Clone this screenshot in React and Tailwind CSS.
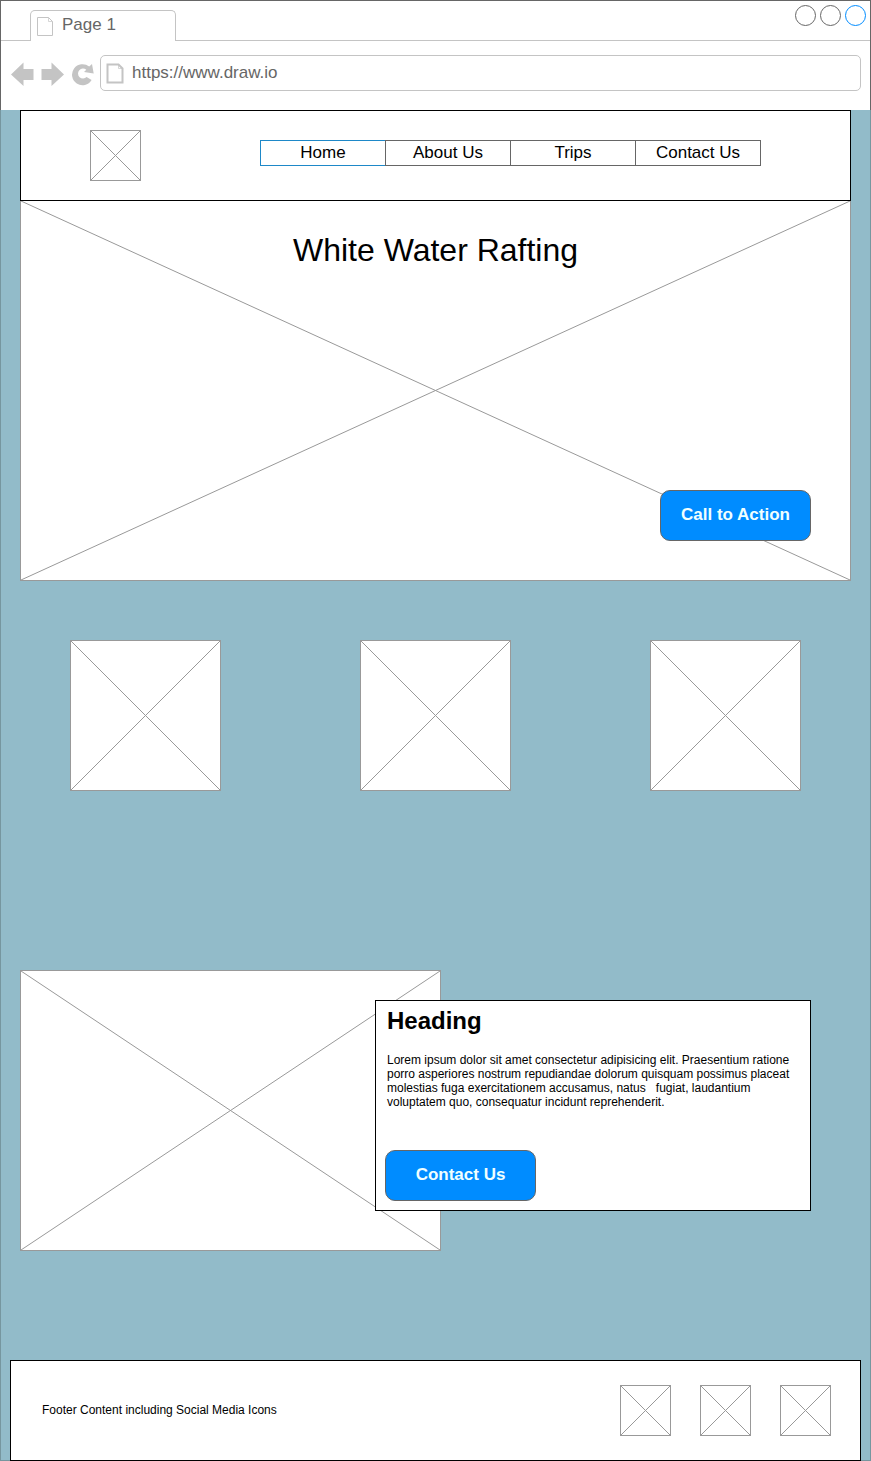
function Placeholder({ className = "", label }) {
  return (
    <div role="img" aria-label={label} className={`border border-[#999999] bg-white ${className}`}>
      <svg className="block h-full w-full" viewBox="0 0 100 100" preserveAspectRatio="none" fill="none" stroke="#999999">
        <path d="M0 0L100 100M100 0L0 100" vectorEffect="non-scaling-stroke" />
      </svg>
    </div>
  );
}

function PageIcon({ className, strokeWidth }) {
  return (
    <svg className={className} viewBox="0 0 18 21" fill="none" stroke="#c4c4c4" strokeWidth={strokeWidth}>
      <path d="M1.500 1.500H12.500L16.500 5.500V19.500H1.500Z" />
      <path d="M12.500 1.500V5.500H16.500" strokeWidth="1" strokeOpacity="0.7" />
    </svg>
  );
}

function Browser() {
  return (
    <div className="border-x border-t border-[#666666] bg-white text-[17px] text-[#666666]">
      <div className="flex h-10 items-end justify-between">
        <div className="h-full w-[29px] shrink-0 border-b border-[#c4c4c4]" />
        <button className="flex h-[31px] w-[146px] shrink-0 items-start rounded-t-[5px] border-x border-t border-[#c4c4c4] pl-[5px]">
          <PageIcon className="mt-[5px] h-[21px] w-[18px]" strokeWidth="1" />
          <span className="ml-2 mt-1 leading-5">Page 1</span>
        </button>
        <div className="flex h-full flex-1 justify-end gap-1 border-b border-[#c4c4c4] pr-1 pt-1">
          <button aria-label="Minimize" className="h-[21px] w-[21px] rounded-full border border-[#666666]" />
          <button aria-label="Maximize" className="h-[21px] w-[21px] rounded-full border border-[#666666]" />
          <button aria-label="Close" className="h-[21px] w-[21px] rounded-full border border-[#008cff]" />
        </div>
      </div>
      <div className="flex h-[69px] items-start pl-[10px] pr-[9px] pt-[14px]">
        <div className="flex w-[89px] shrink-0 gap-[7px] pt-[7px] text-[#c4c4c4]">
          <button aria-label="Back">
            <svg className="block h-6 w-[23px]" viewBox="0 0 23 24" fill="currentColor">
              <path d="M0 12.500L12.500 0.500V7H22.500V18H12.500V24Z" />
            </svg>
          </button>
          <button aria-label="Forward">
            <svg className="block h-6 w-[23px]" viewBox="0 0 23 24" fill="currentColor">
              <path d="M23 12.500L10.500 0.500V7H0.500V18H10.500V24Z" />
            </svg>
          </button>
          <button aria-label="Reload">
            <svg className="block h-6 w-[23px]" viewBox="0 0 23 24" fill="currentColor">
              <path d="M18.200 4.600L21 2L22.700 11.500L13 10L15.300 7.700A5 5 0 1 0 15.600 15L20.600 18A10.500 10.500 0 1 1 18.200 4.600Z" />
            </svg>
          </button>
        </div>
        <div className="flex h-9 flex-1 rounded-[5px] border border-[#c4c4c4] pl-[5px]">
          <PageIcon className="mt-[7px] h-[21px] w-[18px]" strokeWidth="2" />
          <input aria-label="Address" defaultValue="https://www.draw.io" className="ml-2 min-w-0 flex-1 bg-transparent outline-none" />
        </div>
      </div>
    </div>
  );
}

const links = ["Home", "About Us", "Trips", "Contact Us"];

function ActionButton({ children }) {
  return (
    <button className="block h-[51px] w-[151px] rounded-[10px] border border-[#666666] bg-[#008cff] pb-[2px] text-[17px] font-bold text-[#f0ffff]">
      {children}
    </button>
  );
}

export default function App() {
  return (
    <div className="font-['Liberation_Sans',Arial,sans-serif] text-black">
      <Browser />
      <div className="border-x border-b border-[#76969f] bg-[#92bbc9] px-[9px]">
        <div className="px-[10px]">
          <header className="flex h-[91px] items-start border border-black bg-white pl-[69px] pr-[89px] pt-[19px]">
            <Placeholder label="Logo" className="h-[51px] w-[51px] shrink-0" />
            <nav className="ml-[119px] mt-[10px] flex flex-1">
              {links.map((link, i) => (
                <a
                  key={link}
                  href="#"
                  className={`h-[26px] flex-1 border-y border-l text-center text-[17px] leading-[23px] last:border-r ${i === 0 ? "border-[#1e88c8]" : "border-[#666666]"}`}
                >
                  {link}
                </a>
              ))}
            </nav>
          </header>
          <section className="grid">
            <Placeholder label="Hero" className="col-start-1 row-start-1 h-[380px] border-t-0" />
            <div className="col-start-1 row-start-1 flex flex-col items-center justify-between pb-10 pt-[29px]">
              <h1 className="text-[32px] leading-10">White Water Rafting</h1>
              <div className="self-end pr-10">
                <ActionButton>Call to Action</ActionButton>
              </div>
            </div>
          </section>
          <section className="flex justify-between px-[50px] pt-[59px]">
            <Placeholder label="First trip" className="h-[151px] w-[151px]" />
            <Placeholder label="Second trip" className="h-[151px] w-[151px]" />
            <Placeholder label="Third trip" className="h-[151px] w-[151px]" />
          </section>
          <section className="mt-[179px] grid grid-cols-[421fr_370fr] items-start pr-10">
            <Placeholder label="Feature" className="h-[281px]" />
            <article className="relative -ml-[66px] mt-[30px] border border-black bg-white pb-[9px] pl-[9px] pr-[11px] pt-[5px]">
              <h2 className="pl-[2px] text-2xl leading-[29px] font-bold">Heading</h2>
              <p className="mb-[41px] mt-[18px] whitespace-pre-wrap pl-[2px] text-xs leading-[14px]">
                {"Lorem ipsum dolor sit amet consectetur adipisicing elit. Praesentium ratione porro asperiores nostrum repudiandae dolorum quisquam possimus placeat molestias fuga exercitationem accusamus, natus   fugiat, laudantium voluptatem quo, consequatur incidunt reprehenderit."}
              </p>
              <ActionButton>Contact Us</ActionButton>
            </article>
          </section>
        </div>
        <footer className="-mb-px mt-[109px] flex h-[101px] items-center justify-between border border-black bg-white pl-[31px] pr-[29px]">
          <p className="pb-[2px] text-xs">Footer Content including Social Media Icons</p>
          <div className="flex gap-[29px]">
            <Placeholder label="Social link one" className="h-[51px] w-[51px]" />
            <Placeholder label="Social link two" className="h-[51px] w-[51px]" />
            <Placeholder label="Social link three" className="h-[51px] w-[51px]" />
          </div>
        </footer>
      </div>
    </div>
  );
}
